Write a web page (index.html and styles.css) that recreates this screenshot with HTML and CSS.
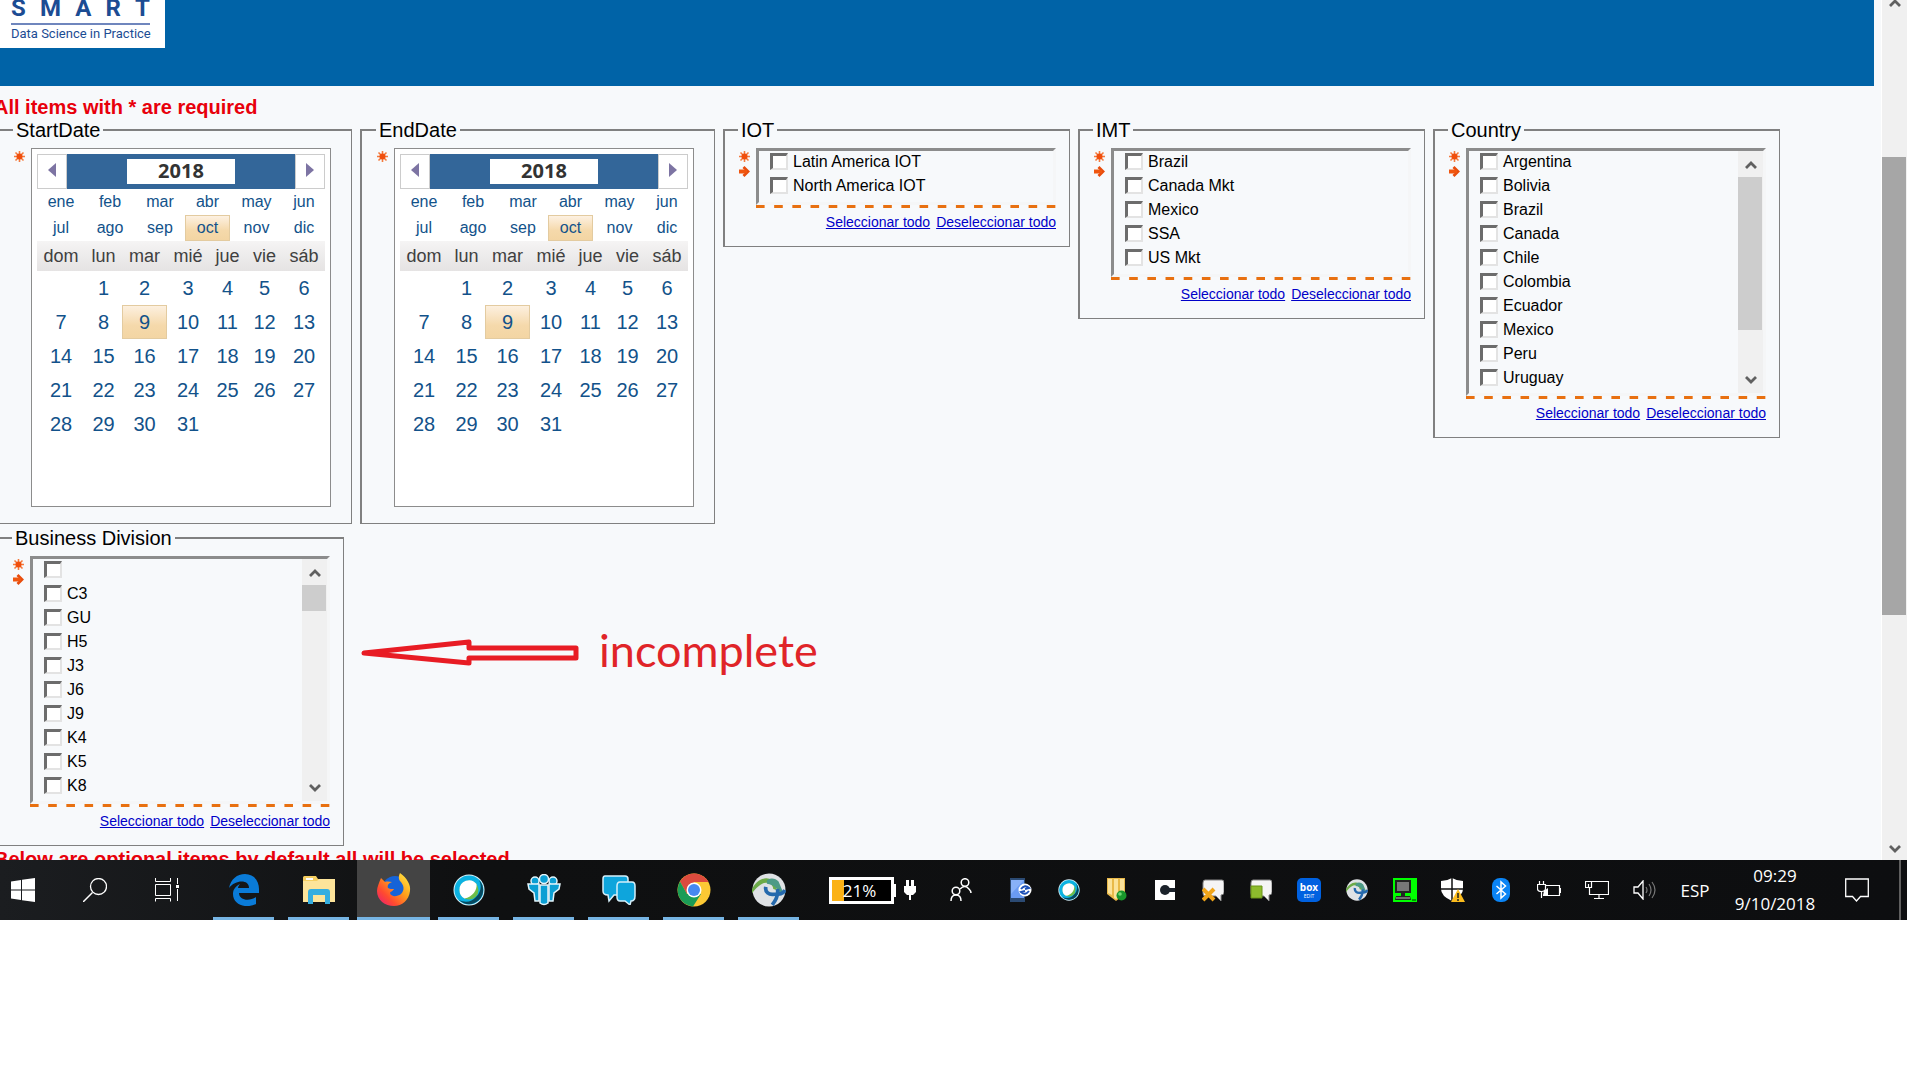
FILE: index.html
```
<!DOCTYPE html>
<html lang="es">
<head>
    <meta charset="UTF-8">
    <meta name="viewport" content="width=device-width, initial-scale=1.0">
    <title>SMART - Prompts</title>
    <link rel="stylesheet" href="styles.css">
</head>
<body>
    <!-- shared icons -->
    <svg class="sprite" aria-hidden="true">
        <symbol id="i-required" viewBox="0 0 11 11">
            <path d="M5.500 0v11M0 5.500h11M1.500 1.500l8 8M9.500 1.500l-8 8" stroke="#f47a3c" stroke-width="1.600"/>
            <circle cx="5.500" cy="5.500" r="3" fill="#f04e0c"/>
        </symbol>
        <symbol id="i-pointer" viewBox="0 0 11 11">
            <path d="M0 3.500h5V7.500H0z" fill="#f0560f"/>
            <path d="M4.500 1l4.500 4.500L4.500 10" fill="none" stroke="#e84c0c" stroke-width="2.800"/>
            <path d="M2 5.500h6" stroke="#f0560f" stroke-width="3"/>
        </symbol>
        <symbol id="i-up" viewBox="0 0 12 10">
            <path d="M1 8l5-5 5 5" fill="none" stroke="#606060" stroke-width="2.800"/>
        </symbol>
        <symbol id="i-down" viewBox="0 0 12 10">
            <path d="M1 2l5 5 5-5" fill="none" stroke="#606060" stroke-width="2.800"/>
        </symbol>
        <symbol id="i-webex" viewBox="0 0 32 32">
            <circle cx="16" cy="16" r="15.500" fill="#d8f1fa"/>
            <circle cx="16" cy="16" r="14.500" fill="#0bb2e2"/>
            <path d="M26 6a14 14 0 0 1-20 20c6 3 13 2 17-3 5-5 6-11 3-17z" fill="#06485f"/>
            <circle cx="16" cy="16" r="9.500" fill="#6ebe4a"/>
            <path d="M6.500 16a9.500 9.500 0 0 1 17-6c1 6-4 13-12 14.500a9.500 9.500 0 0 1-5-8.500z" fill="#fff"/>
        </symbol>
        <symbol id="i-cisco" viewBox="0 0 32 32">
            <circle cx="16" cy="16" r="15.500" fill="#dfe2e5"/>
            <path d="M0 15C4 7 13 2 19 7c3 2 5 5 4 9l-3-1c0-5-7-8-12-4-3 2-5 4-8 8z" fill="#6cab48"/>
            <path d="M14 7c4-3 8-2 11 1l5 12-4-2c-3-4-5-7-12-8z" fill="#4c9a86"/>
            <path d="M13 13c-1 5 3 8 8 7 5 0 8 0 10-4M24 15c1 6-1 10-5 15" fill="none" stroke="#2569ad" stroke-width="3.500"/>
        </symbol>
    </svg>

    <div class="desktop">
        <div class="browser">
            <div class="page">
                <header class="banner">
                    <div class="logo">
                        <div class="logo-name"><span>S</span><span>M</span><span>A</span><span>R</span><span>T</span></div>
                        <div class="logo-tagline">Data Science in Practice</div>
                    </div>
                </header>

                <main class="prompts">
                    <h2 class="notice">All items with * are required</h2>

                    <div class="prompt-row">
                        <fieldset class="prompt prompt-date">
                            <legend>StartDate</legend>
                            <div class="prompt-body">
                                <div class="marks"><svg><use href="#i-required"/></svg></div>
                                <div class="calendar">
                                    <div class="cal-year">
                                        <button type="button" aria-label="Previous year"><svg width="8" height="14"><path d="M8 0v14L0 7z" fill="#7d74a3"/></svg></button>
                                        <input type="text" value="2018" aria-label="Start year">
                                        <button type="button" aria-label="Next year"><svg width="8" height="14"><path d="M0 0v14l8-7z" fill="#7d74a3"/></svg></button>
                                    </div>
                                    <div class="cal-months">
                                        <button type="button">ene</button><button type="button">feb</button><button type="button">mar</button><button type="button">abr</button><button type="button">may</button><button type="button">jun</button>
                                        <button type="button">jul</button><button type="button">ago</button><button type="button">sep</button><button type="button" class="selected">oct</button><button type="button">nov</button><button type="button">dic</button>
                                    </div>
                                    <table class="cal-days">
                                        <thead>
                                            <tr><th>dom</th><th>lun</th><th>mar</th><th>mié</th><th>jue</th><th>vie</th><th>sáb</th></tr>
                                        </thead>
                                        <tbody>
                                            <tr><td></td><td>1</td><td>2</td><td>3</td><td>4</td><td>5</td><td>6</td></tr>
                                            <tr><td>7</td><td>8</td><td class="selected">9</td><td>10</td><td>11</td><td>12</td><td>13</td></tr>
                                            <tr><td>14</td><td>15</td><td>16</td><td>17</td><td>18</td><td>19</td><td>20</td></tr>
                                            <tr><td>21</td><td>22</td><td>23</td><td>24</td><td>25</td><td>26</td><td>27</td></tr>
                                            <tr><td>28</td><td>29</td><td>30</td><td>31</td><td></td><td></td><td></td></tr>
                                        </tbody>
                                    </table>
                                </div>
                            </div>
                        </fieldset>

                        <fieldset class="prompt prompt-date">
                            <legend>EndDate</legend>
                            <div class="prompt-body">
                                <div class="marks"><svg><use href="#i-required"/></svg></div>
                                <div class="calendar">
                                    <div class="cal-year">
                                        <button type="button" aria-label="Previous year"><svg width="8" height="14"><path d="M8 0v14L0 7z" fill="#7d74a3"/></svg></button>
                                        <input type="text" value="2018" aria-label="End year">
                                        <button type="button" aria-label="Next year"><svg width="8" height="14"><path d="M0 0v14l8-7z" fill="#7d74a3"/></svg></button>
                                    </div>
                                    <div class="cal-months">
                                        <button type="button">ene</button><button type="button">feb</button><button type="button">mar</button><button type="button">abr</button><button type="button">may</button><button type="button">jun</button>
                                        <button type="button">jul</button><button type="button">ago</button><button type="button">sep</button><button type="button" class="selected">oct</button><button type="button">nov</button><button type="button">dic</button>
                                    </div>
                                    <table class="cal-days">
                                        <thead>
                                            <tr><th>dom</th><th>lun</th><th>mar</th><th>mié</th><th>jue</th><th>vie</th><th>sáb</th></tr>
                                        </thead>
                                        <tbody>
                                            <tr><td></td><td>1</td><td>2</td><td>3</td><td>4</td><td>5</td><td>6</td></tr>
                                            <tr><td>7</td><td>8</td><td class="selected">9</td><td>10</td><td>11</td><td>12</td><td>13</td></tr>
                                            <tr><td>14</td><td>15</td><td>16</td><td>17</td><td>18</td><td>19</td><td>20</td></tr>
                                            <tr><td>21</td><td>22</td><td>23</td><td>24</td><td>25</td><td>26</td><td>27</td></tr>
                                            <tr><td>28</td><td>29</td><td>30</td><td>31</td><td></td><td></td><td></td></tr>
                                        </tbody>
                                    </table>
                                </div>
                            </div>
                        </fieldset>

                        <fieldset class="prompt">
                            <legend>IOT</legend>
                            <div class="prompt-body">
                                <div class="marks"><svg><use href="#i-required"/></svg><svg><use href="#i-pointer"/></svg></div>
                                <div class="picker">
                                    <div class="list">
                                        <div class="options">
                                            <label><input type="checkbox">Latin America IOT</label>
                                            <label><input type="checkbox">North America IOT</label>
                                        </div>
                                    </div>
                                    <div class="dashes"></div>
                                    <div class="links"><a href="#">Seleccionar todo</a><a href="#">Deseleccionar todo</a></div>
                                </div>
                            </div>
                        </fieldset>

                        <fieldset class="prompt">
                            <legend>IMT</legend>
                            <div class="prompt-body">
                                <div class="marks"><svg><use href="#i-required"/></svg><svg><use href="#i-pointer"/></svg></div>
                                <div class="picker">
                                    <div class="list">
                                        <div class="options">
                                            <label><input type="checkbox">Brazil</label>
                                            <label><input type="checkbox">Canada Mkt</label>
                                            <label><input type="checkbox">Mexico</label>
                                            <label><input type="checkbox">SSA</label>
                                            <label><input type="checkbox">US Mkt</label>
                                        </div>
                                    </div>
                                    <div class="dashes"></div>
                                    <div class="links"><a href="#">Seleccionar todo</a><a href="#">Deseleccionar todo</a></div>
                                </div>
                            </div>
                        </fieldset>

                        <fieldset class="prompt">
                            <legend>Country</legend>
                            <div class="prompt-body">
                                <div class="marks"><svg><use href="#i-required"/></svg><svg><use href="#i-pointer"/></svg></div>
                                <div class="picker">
                                    <div class="list">
                                        <div class="options">
                                            <label><input type="checkbox">Argentina</label>
                                            <label><input type="checkbox">Bolivia</label>
                                            <label><input type="checkbox">Brazil</label>
                                            <label><input type="checkbox">Canada</label>
                                            <label><input type="checkbox">Chile</label>
                                            <label><input type="checkbox">Colombia</label>
                                            <label><input type="checkbox">Ecuador</label>
                                            <label><input type="checkbox">Mexico</label>
                                            <label><input type="checkbox">Peru</label>
                                            <label><input type="checkbox">Uruguay</label>
                                        </div>
                                        <div class="scrollbar">
                                            <svg><use href="#i-up"/></svg>
                                            <div class="track"><div class="thumb thumb-large"></div></div>
                                            <svg><use href="#i-down"/></svg>
                                        </div>
                                    </div>
                                    <div class="dashes"></div>
                                    <div class="links"><a href="#">Seleccionar todo</a><a href="#">Deseleccionar todo</a></div>
                                </div>
                            </div>
                        </fieldset>
                    </div>

                    <div class="prompt-row">
                        <fieldset class="prompt">
                            <legend>Business Division</legend>
                            <div class="prompt-body">
                                <div class="marks"><svg><use href="#i-required"/></svg><svg><use href="#i-pointer"/></svg></div>
                                <div class="picker">
                                    <div class="list">
                                        <div class="options">
                                            <label><input type="checkbox" aria-label="Blank"></label>
                                            <label><input type="checkbox">C3</label>
                                            <label><input type="checkbox">GU</label>
                                            <label><input type="checkbox">H5</label>
                                            <label><input type="checkbox">J3</label>
                                            <label><input type="checkbox">J6</label>
                                            <label><input type="checkbox">J9</label>
                                            <label><input type="checkbox">K4</label>
                                            <label><input type="checkbox">K5</label>
                                            <label><input type="checkbox">K8</label>
                                        </div>
                                        <div class="scrollbar">
                                            <svg><use href="#i-up"/></svg>
                                            <div class="track"><div class="thumb thumb-small"></div></div>
                                            <svg><use href="#i-down"/></svg>
                                        </div>
                                    </div>
                                    <div class="dashes"></div>
                                    <div class="links"><a href="#">Seleccionar todo</a><a href="#">Deseleccionar todo</a></div>
                                </div>
                            </div>
                        </fieldset>

                        <div class="annotation">
                            <svg width="218" height="34" viewBox="0 0 218 34"><path d="M3 20L108 9v6h107v10H108v5z" fill="none" stroke="#e81c24" stroke-width="5" stroke-linejoin="round"/></svg>
                            <span>incomplete</span>
                        </div>
                    </div>

                    <h2 class="notice notice-cut">Below are optional items by default all will be selected</h2>
                </main>
            </div>

            <div class="page-scrollbar">
                <svg><use href="#i-up"/></svg>
                <div class="page-thumb"></div>
                <svg><use href="#i-down"/></svg>
            </div>
        </div>

        <footer class="taskbar">
            <button class="start" aria-label="Start">
                <svg width="24" height="24" viewBox="0 0 24 24"><path d="M0 3.500l10-1.500v9.500H0zM11 1.800L24 0v11.500H11zM0 12.500h10V22L0 20.500zM11 12.500h13V24l-13-1.800z" fill="#fff"/></svg>
            </button>
            <button class="tool" aria-label="Search">
                <svg width="24" height="24" viewBox="0 0 24 24"><circle cx="15.500" cy="8.500" r="8" fill="none" stroke="#fff" stroke-width="1.300"/><path d="M9.500 14.500L0 24" stroke="#fff" stroke-width="1.500"/></svg>
            </button>
            <button class="tool" aria-label="Task view">
                <svg width="24" height="24" viewBox="0 0 24 24"><path d="M.500 0v3.500h15V0M.500 6.500h15v11H.500zM.500 23.500V20.500h15v3M22.500 0v6M22.500 11v12" fill="none" stroke="#fff"/><path d="M21 7h3v3h-3z" fill="#fff"/></svg>
            </button>
            <div class="tasks">
                <button class="task" aria-label="Edge">
                    <svg width="32" height="32" viewBox="0 0 32 32"><path d="M1 14C3 5 9 0 17 0c9 0 14 7 14 15v4H11c0 7 10 9 17 4v7c-10 5-23 1-23-10 0-5 3-8 7-10-1 1-2 3-2 4h11c0-9-14-8-20 0z" fill="#0a7bd8"/></svg>
                </button>
                <button class="task" aria-label="File Explorer">
                    <svg width="32" height="28" viewBox="0 0 32 28"><path d="M0 1.500A1.500 1.500 0 0 1 1.500 0H13l2 3h15.500A1.500 1.500 0 0 1 32 4.500V26H0z" fill="#f6cf62"/><path d="M0 5h14l2-2h16v23H0z" fill="#fde49a"/><path d="M3 2h7v2H3z" fill="#fff"/><path d="M5 28V16a3 3 0 0 1 3-3h16a3 3 0 0 1 3 3v12h-5v-9H10v9z" fill="#35aee0"/></svg>
                </button>
                <button class="task active" aria-label="Firefox">
                    <svg width="34" height="34" viewBox="0 0 34 34">
                        <defs><linearGradient id="fox" x1="1" y1="0" x2="0" y2="1"><stop offset="0" stop-color="#fff24a"/><stop offset=".4" stop-color="#ffa11a"/><stop offset=".7" stop-color="#ff4a30"/><stop offset="1" stop-color="#e5177f"/></linearGradient></defs>
                        <circle cx="18" cy="16" r="13" fill="#1563d8"/>
                        <path d="M4 5l4 4c3-1 5 0 7 0-3 1-5 3-4 6 1 1 4 1 6 1-1 2-4 3-4 4 1 4 7 4 11 1 4-4 3-9-1-13-2-3-1-6 0-8 7 5 11 12 10 18-1 9-8 15-16 15C8 33 0 27 0 18c0-4 2-8 4-13z" fill="url(#fox)"/>
                    </svg>
                </button>
                <button class="task" aria-label="Webex"><svg width="32" height="32"><use href="#i-webex"/></svg></button>
                <button class="task" aria-label="Team">
                    <svg width="34" height="32" viewBox="0 0 34 32"><g fill="#0b9fd4" stroke="#e4f5fb" stroke-width="1.500"><circle cx="8" cy="7" r="4"/><circle cx="26" cy="7" r="4"/><path d="M1 10h11v17H8l-1-8-5-4zM33 10H22v17h4l1-8 5-4z"/><circle cx="17" cy="5" r="4.500"/><path d="M13 11h8v18q-4 3-8 0z"/></g></svg>
                </button>
                <button class="task" aria-label="Chat">
                    <svg width="34" height="30" viewBox="0 0 34 30"><g fill="#0ea5dc" stroke="#d5effa" stroke-width="1.500"><path d="M3 1h20q3 0 3 3v13q0 3-3 3H12l-5 6-1-6q-5 0-5-4V4q0-3 2-3z"/><path d="M18 7h12q3 0 3 4v10q0 5-4 5l-1 4-5-4h-5q-3 0-3-4V11q0-4 3-4z"/></g></svg>
                </button>
                <button class="task" aria-label="Chrome">
                    <svg width="34" height="34" viewBox="0 0 34 34"><circle cx="17" cy="17" r="16.500" fill="#fcc934"/><path d="M3 8.500A16.500 16.500 0 0 1 31.500 9H17l-7 12z" fill="#dd4b3e"/><path d="M3 8.500A16.500 16.500 0 0 0 16 33.500L24 21H10z" fill="#1a9c56"/><circle cx="17" cy="17" r="7.500" fill="#fff"/><circle cx="17" cy="17" r="6" fill="#4688f1"/></svg>
                </button>
                <button class="task" aria-label="AnyConnect"><svg width="34" height="34"><use href="#i-cisco"/></svg></button>
            </div>

            <div class="tray">
                <div class="battery"><span>21%</span></div>
                <svg class="plug" width="12" height="20" viewBox="0 0 12 20"><path d="M2 0h3v6h2V0h3v6h2v6l-3 3H7v5H5v-5H3l-3-3V6h2z" fill="#fff"/></svg>
                <button class="people" aria-label="People">
                    <svg width="22" height="24" viewBox="0 0 22 24"><g fill="none" stroke="#fff" stroke-width="1.500"><circle cx="15" cy="4.500" r="3.800"/><circle cx="6" cy="13" r="3.800"/><path d="M10 11q5-5 9 0 2 2 2 4M1 23q0-6 5-6t5 6"/></g></svg>
                </button>
                <button class="tray-icon" aria-label="Sync">
                    <svg width="22" height="24" viewBox="0 0 22 24"><path d="M0 0h15v24H0z" fill="#2b4a73"/><path d="M1 2h13v18H1z" fill="#6a9bf3"/><path d="M1 2h13L1 16z" fill="#88b1f8"/><circle cx="15" cy="12" r="6.500" fill="#fff"/><path d="M11 11q4-5 8-1l-4 1M19 13q-4 5-8 1l4-1" fill="none" stroke="#1c50b8" stroke-width="2"/></svg>
                </button>
                <button class="tray-icon" aria-label="Webex"><svg width="22" height="22"><use href="#i-webex"/></svg></button>
                <button class="tray-icon" aria-label="Files">
                    <svg width="20" height="24" viewBox="0 0 20 24"><path d="M0 0h18v16l-9 7-9-7z" fill="#e9b949"/><path d="M1 1h4v16l-4-2zM7 1h4v19l-2 1-2-1zM13 1h4v14l-4 3z" fill="#fbe29a"/><circle cx="14.500" cy="17.500" r="5" fill="#19962c"/><circle cx="13" cy="16" r="1.800" fill="#6ed873"/></svg>
                </button>
                <button class="tray-icon" aria-label="Client">
                    <svg width="20" height="20" viewBox="0 0 20 20"><path d="M0 0h20v20H0z" fill="#fff"/><circle cx="10" cy="10" r="5" fill="#1b222a"/><path d="M11 8h9v4h-9z" fill="#1b222a"/></svg>
                </button>
                <button class="tray-icon" aria-label="Chat error">
                    <svg width="22" height="24" viewBox="0 0 22 24"><path d="M3 2h17q2 0 2 3v9q0 3-3 3v6l-5-5H3q-2 0-2-3V5q0-3 2-3z" fill="#f5f5f5" stroke="#888"/><path d="M1 11l11 11M12 11L1 22" stroke="#f0a51a" stroke-width="4"/></svg>
                </button>
                <button class="tray-icon" aria-label="Chat status">
                    <svg width="22" height="24" viewBox="0 0 22 24"><path d="M3 2h17q2 0 2 3v9q0 3-3 3v6l-5-5H3q-2 0-2-3V5q0-3 2-3z" fill="#f5f5f5" stroke="#888"/><path d="M1 8h11v12H1z" fill="#8dbb2d" stroke="#6b9418"/></svg>
                </button>
                <button class="tray-icon" aria-label="Box Edit"><span class="box-edit">box<small>EDIT</small></span></button>
                <button class="tray-icon" aria-label="AnyConnect"><svg width="22" height="22"><use href="#i-cisco"/></svg></button>
                <button class="tray-icon" aria-label="Remote PC">
                    <svg width="24" height="24" viewBox="0 0 24 24"><path d="M0 0h24v24H0z" fill="#0f0"/><path d="M2 2h16v13H2z" fill="#222"/><path d="M4 4h12v9H4z" fill="#777"/><path d="M8 15h4v3H8zM3 18h14l1 4H2z" fill="#222"/><path d="M3 20h14" stroke="#bbb"/><path d="M19 22h4" stroke="#030"/></svg>
                </button>
                <button class="tray-icon" aria-label="Security">
                    <svg width="24" height="24" viewBox="0 0 24 24"><path d="M11 0q5 3 11 3v8q0 7-11 12Q0 18 0 11V3q6 0 11-3z" fill="#fff"/><path d="M11 0v23M0 11h22" stroke="#111" stroke-width="1.500"/><path d="M17 11l7 13H10z" fill="#fbbc1e"/><path d="M17 15v5M17 21v2" stroke="#222" stroke-width="1.500"/></svg>
                </button>
                <button class="tray-icon" aria-label="Bluetooth">
                    <svg width="18" height="24" viewBox="0 0 18 24"><rect width="18" height="24" rx="8" fill="#0a84f5"/><path d="M4.500 8l9 8L9 20V4l4.500 4-9 8" fill="none" stroke="#fff" stroke-width="1.500"/></svg>
                </button>
                <button class="tray-icon" aria-label="Power">
                    <svg width="24" height="18" viewBox="0 0 24 18"><path d="M8 4.500h14.500v10H6M2.500 0v3M6.500 0v3M.500 3.500h8v4q0 3-4 3-4 0-4-3zM4.500 11v6" fill="none" stroke="#fff" stroke-width="1.200"/><path d="M7 10l4-3v7H6zM23 7h1v5h-1z" fill="#fff"/></svg>
                </button>
                <button class="tray-icon" aria-label="Network">
                    <svg width="24" height="20" viewBox="0 0 24 20"><path d="M7 1.500h16.500v13H4.500V8M.500 1.500h6v6h-6zM3.500 4v4M14 14.500v4M9 18.500h10" fill="none" stroke="#fff" stroke-width="1.200"/></svg>
                </button>
                <button class="tray-icon" aria-label="Volume">
                    <svg width="24" height="20" viewBox="0 0 24 20"><path d="M1 7h4l5-6v18l-5-6H1z" fill="none" stroke="#fff" stroke-width="1.300"/><g fill="none" stroke="#777" stroke-width="1.200"><path d="M13 7q2 3 0 6M16 4q4 6 0 12M19 2q6 8 0 16"/></g></svg>
                </button>
                <button class="language">ESP</button>
                <button class="clock"><span>09:29</span><span>9/10/2018</span></button>
                <button class="notifications" aria-label="Notifications">
                    <svg width="24" height="24" viewBox="0 0 24 24"><path d="M.700 1h22.600v17.500H15.500L11.500 23l-4-4.500H.700z" fill="none" stroke="#fff" stroke-width="1.300"/></svg>
                </button>
                <div class="show-desktop"></div>
            </div>
        </footer>
    </div>
</body>
</html>
```

FILE: styles.css
```
* {
    box-sizing: border-box;
}
body {
    margin: 0;
    background: #fff;
    color: #000;
    font-family: "Liberation Sans", Arial, sans-serif;
    font-size: 16px;
}
button {
    padding: 0;
    border: none;
    background: none;
    color: inherit;
    font: inherit;
    cursor: pointer;
}
svg {
    display: block;
    flex: none;
}
.sprite {
    position: absolute;
    width: 0;
    height: 0;
}
.desktop {
    margin-right: 13px;
    overflow: hidden;
}
.browser {
    display: flex;
    background: #f7f9fb;
}
.page {
    flex: 1;
    min-width: 0;
    overflow: hidden;
}

/* banner */
.banner {
    height: 86px;
    margin-right: 7px;
    background: #0063a7;
}
.logo {
    width: 165px;
    height: 48px;
    padding: 0 15px 0 11px;
    background: #fff;
    color: #1c4c93;
    font-family: Roboto, sans-serif;
}
.logo-name {
    display: flex;
    justify-content: space-between;
    height: 25px;
    border-bottom: 2px solid #6f86bd;
    font-size: 24px;
    font-weight: bold;
    line-height: 16px;
}
.logo-tagline {
    font-size: 13px;
    line-height: 17px;
    white-space: nowrap;
}

/* prompts */
.prompts {
    margin-left: -6px;
    padding-top: 10px;
}
.notice {
    margin: 0;
    color: #e8000b;
    font-size: 20px;
    line-height: 22px;
}
.notice-cut {
    height: 12px;
    overflow: hidden;
}
.prompt-row {
    display: flex;
    align-items: flex-start;
    gap: 8px;
    margin-bottom: 2px;
    padding-left: 3px;
}
.prompt {
    flex: none;
    min-width: 0;
    margin: 0;
    padding: 6px 13px 16px 14px;
    border: solid #808080;
    border-width: 2px 1px 1px 2px;
}
.prompt-date {
    padding-right: 20px;
    padding-left: 15px;
}
.prompt legend {
    margin-left: -1px;
    padding: 0 3px;
    font-size: 20px;
    line-height: 24px;
}
.prompt-body {
    display: flex;
    gap: 6px;
}
.marks {
    display: flex;
    flex-direction: column;
    gap: 4px;
    padding-top: 3px;
}
.marks svg {
    width: 11px;
    height: 11px;
}

/* calendar */
.calendar {
    width: 300px;
    height: 359px;
    padding: 5px;
    border: 1px solid #8c8c8c;
    background: #fff;
    color: #12528a;
}
.cal-year {
    display: flex;
    align-items: center;
    justify-content: space-between;
    height: 35px;
    background: #336699;
}
.cal-year button {
    display: flex;
    align-items: center;
    justify-content: center;
    width: 30px;
    height: 35px;
    padding-bottom: 4px;
    border: 1px solid #ccc;
    background: #fff;
}
.cal-year input {
    width: 108px;
    height: 25px;
    padding: 0 0 2px;
    border: none;
    background: #fff;
    color: #333;
    font-family: "Noto Sans", sans-serif;
    font-size: 20px;
    font-weight: bold;
    text-align: center;
}
.cal-months {
    display: grid;
    grid-template-columns: 48px 50px 50px 45px 53px 1fr;
    grid-auto-rows: 26px;
}
.cal-months button {
    border: 1px solid transparent;
    font-size: 16px;
}
.cal-days {
    width: 100%;
    border-collapse: collapse;
    table-layout: fixed;
    text-align: center;
}
.cal-days th {
    width: 42px;
    height: 30px;
    padding: 0;
    color: #404040;
    font-size: 18px;
    font-weight: normal;
}
.cal-days th:nth-child(1) {
    width: 48px;
}
.cal-days th:nth-child(2),
.cal-days th:nth-child(5),
.cal-days th:nth-child(6) {
    width: 37px;
}
.cal-days th:nth-child(3) {
    width: 45px;
}
.cal-days thead tr {
    background: linear-gradient(#f5f4f4, #e5e3e3);
}
.cal-days td {
    height: 34px;
    padding: 0;
    font-size: 20px;
}
.cal-months .selected,
.cal-days .selected {
    background: linear-gradient(#fdf1e2, #f5d9ab 60%, #f3d5a3);
    border-color: #e3cba0;
}
.cal-days .selected {
    box-shadow: inset 0 0 0 1px #e3cba0;
}

/* check lists */
.picker {
    width: 300px;
}
.list {
    display: flex;
    justify-content: space-between;
    max-height: 248px;
    border: 3px solid #f5f6f7;
    border-top-color: #8c8c8c;
    border-left-color: #8c8c8c;
    overflow: hidden;
}
.options {
    padding: 0 0 3px 11px;
}
.options label {
    display: flex;
    align-items: flex-start;
    gap: 5px;
    height: 24px;
    line-height: 21px;
}
.options input {
    appearance: none;
    width: 18px;
    height: 17px;
    margin: 2px 0 0;
    border: 3px solid #6c6c6c;
    border-right: 2px solid #e3e3e3;
    border-bottom: 2px solid #e3e3e3;
    background: #fff;
}
.dashes {
    height: 3px;
    background: linear-gradient(90deg, #e87010 50%, transparent 50%) 0 0 / calc(100% / 16.5) 100%;
}
.links {
    display: flex;
    justify-content: flex-end;
    gap: 6px;
    padding-top: 6px;
    font-size: 14px;
    line-height: 16px;
}
.links a {
    color: #0000c8;
}
.scrollbar,
.page-scrollbar {
    display: flex;
    flex-direction: column;
    align-items: center;
    background: #f0f0f0;
}
.scrollbar {
    width: 25px;
    height: 242px;
    padding: 9px 0 8px;
}
.scrollbar svg,
.page-scrollbar svg {
    width: 12px;
    height: 10px;
}
.track {
    flex: 1;
    width: 100%;
    padding-top: 7px;
}
.thumb {
    margin-right: 1px;
    background: #cdcdcd;
}
.thumb-large {
    height: 153px;
}
.thumb-small {
    height: 26px;
}
.page-scrollbar {
    justify-content: space-between;
    width: 26px;
    padding-bottom: 6px;
    border-left: 1px solid #fff;
}
.page-scrollbar svg:first-child {
    margin-top: -2px;
}
.page-thumb {
    width: 24px;
    height: 458px;
    margin: 149px 1px auto 0;
    background: #a6a6a6;
}

/* review note */
.annotation {
    display: flex;
    align-items: center;
    gap: 20px;
    margin: 98px 0 0 9px;
    color: #e02428;
    font-family: Lato, sans-serif;
    font-size: 45px;
    line-height: 52px;
}

/* taskbar */
.taskbar {
    display: flex;
    height: 60px;
    background: linear-gradient(90deg, #1b1d20, #0f1011 25%, #0d0e10);
    color: #fff;
    font-family: "Open Sans", sans-serif;
    font-size: 17px;
}
.taskbar button {
    display: flex;
    align-items: center;
    justify-content: center;
    flex: none;
}
.taskbar .start {
    width: 59px;
    padding-right: 13px;
}
.tool {
    width: 72px;
}
.tasks {
    display: flex;
    gap: 2px;
    margin-left: 4px;
}
.task {
    position: relative;
    width: 73px;
}
.task::after {
    content: "";
    position: absolute;
    bottom: 0;
    left: 6px;
    right: 6px;
    height: 3px;
    background: #76b4e3;
}
.task.active {
    background: #444;
}
.task.active::after {
    left: 0;
    right: 0;
}
.tray {
    display: flex;
    align-items: stretch;
    margin-left: auto;
}
.battery {
    position: relative;
    align-self: center;
    width: 65px;
    height: 27px;
    padding-right: 4px;
    border: 3px solid #fff;
    background: linear-gradient(90deg, #fbb216 12px, #000 12px);
    font-size: 17px;
    line-height: 21px;
    text-align: center;
}
.battery::after {
    content: "";
    position: absolute;
    top: 4px;
    right: -5px;
    width: 3px;
    height: 13px;
    background: #fff;
}
.plug {
    align-self: center;
    margin: 0 21px 0 10px;
}
.people {
    width: 48px;
    margin-right: 12px;
}
.tray-icon {
    width: 48px;
}
.box-edit {
    width: 24px;
    height: 24px;
    border-radius: 5px;
    background: #0061e0;
    font-size: 10px;
    font-weight: bold;
    line-height: 13px;
    padding-top: 3px;
}
.box-edit small {
    display: block;
    font-size: 5px;
    font-weight: normal;
    line-height: 5px;
}
.language {
    width: 52px;
}
.taskbar .clock {
    flex-direction: column;
    width: 108px;
    line-height: 28px;
}
.notifications {
    width: 56px;
}
.show-desktop {
    width: 2px;
    margin: 0 6px 0 14px;
    background: #5f5f5f;
}
```
